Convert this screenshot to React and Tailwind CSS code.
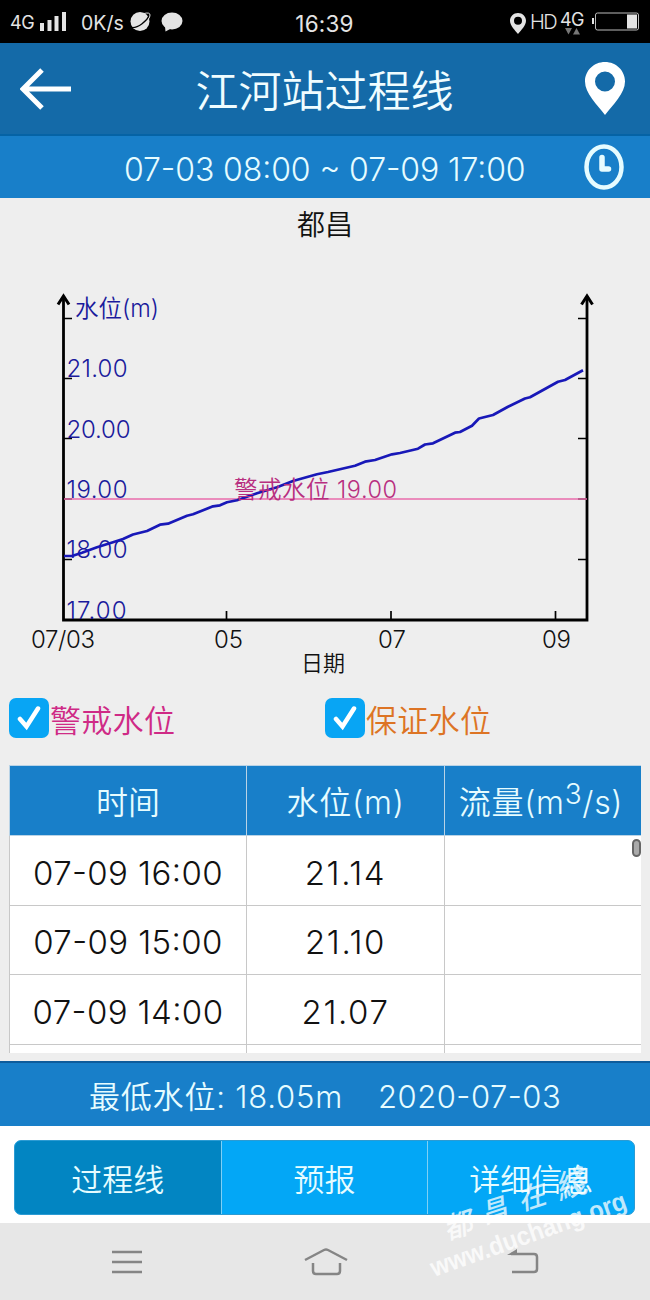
import { useState } from 'react';

const FONT = "font-[Inter,'Noto_Sans_CJK_SC',sans-serif]";

// 水位過程線的折線座標
const LINE_POINTS =
  '64,556 72,556 82,552.7 97,547.3 113,542.3 123,539 133,534.5 147,531 160,524.7 168,523.7 187,515.7 193,514.3 213,506.3 220,505.3 227,502.3 237,500.3 257,493.3 277,487.3 293,481 317,474.3 328,472 355,465.7 365,461.7 375,460 392,454.3 400,453 418,448.7 425,444.5 433,443.3 455,432.7 460,432 472,425.7 479,418.5 493,415 508,406.7 525,398.5 530,397.3 558,381.7 565,380 583,370.3';

const Y_LABELS = [
  { text: '21.00', y: 377, width: 61 },
  { text: '20.00', y: 437.5, width: 64 },
  { text: '19.00', y: 498, width: 61 },
  { text: '18.00', y: 558, width: 61 },
  { text: '17.00', y: 618.5, width: 60 },
];

const X_LABELS = [
  { text: '07/03', x: 31, width: 64 },
  { text: '05', x: 214, width: 29 },
  { text: '07', x: 378, width: 28 },
  { text: '09', x: 542, width: 29 },
];

const ROWS = [
  { time: '07-09 16:00', level: '21.14', flow: '' },
  { time: '07-09 15:00', level: '21.10', flow: '' },
  { time: '07-09 14:00', level: '21.07', flow: '' },
];

const TABS = ['过程线', '预报', '详细信息'];

function PinIcon({ className }) {
  return (
    <svg viewBox="0 0 40 53" className={className} fill="currentColor">
      <path
        fillRule="evenodd"
        d="M20 0C8.800 0 0 8.700 0 19.500C0 31.500 12 42.500 20 53C28 42.500 40 31.500 40 19.500C40 8.700 31.200 0 20 0ZM20 9.500A10 10 0 1 1 20 29.500A10 10 0 1 1 20 9.500Z"
      />
    </svg>
  );
}

/** 手機系統狀態列 */
function StatusBar() {
  return (
    <div className="flex h-[43px] items-center justify-between bg-black text-[#e4e4e4]">
      <div className="flex w-[260px] items-center pl-[10px]">
        <span className="mt-[2px] text-[18px] tracking-[-0.5px]">4G</span>
        <svg width="26" height="20" viewBox="0 0 26 20" className="ml-[6px]" fill="currentColor">
          <rect x="0" y="11" width="4" height="8" />
          <rect x="7.500" y="8" width="4" height="11" />
          <rect x="14.500" y="4" width="4" height="15" />
          <rect x="22" y="0" width="4" height="19" />
        </svg>
        <span className="mt-[4px] ml-[15px] w-[45px] text-[19.500px] whitespace-nowrap">0K/s</span>
        <svg width="21" height="21" viewBox="0 0 21 21" className="ml-[4px]">
          <circle cx="10" cy="10.500" r="9.500" fill="currentColor" />
          <path d="M2 16.500C8 17 17 10 19.500 4" fill="none" stroke="#000" strokeWidth="1.300" />
          <path d="M14 2.500Q20 1 20 4Q20 6 18.500 8" fill="none" stroke="currentColor" strokeWidth="1" />
        </svg>
        <svg width="22" height="20" viewBox="0 0 22 20" className="ml-[10px]" fill="currentColor">
          <ellipse cx="11" cy="9" rx="10.500" ry="8.500" />
          <path d="M4 14L4.500 19.500L11 16Z" />
        </svg>
      </div>
      <span className="mt-[4px] -ml-px text-[22.500px] tracking-[0.2px] [font-feature-settings:'calt'_0]">16:39</span>
      <div className="flex w-[260px] items-center justify-end pr-[11px]">
        <PinIcon className="mt-[3px] h-[23px] w-[16px]" />
        <span className="ml-[4px] w-[26px] text-[20px] leading-[28px] font-light tracking-[-1.500px] whitespace-nowrap">HD</span>
        <div className="mt-[2px] ml-[4px] flex flex-col items-center">
          <span className="text-[18px] leading-[17px] tracking-[-0.5px]">4G</span>
          <svg width="16" height="7" viewBox="0 0 16 7" fill="#777">
            <path d="M1 0H8L4.500 6.500Z" />
            <path d="M9 6.500H16L12.500 0Z" />
          </svg>
        </div>
        <svg width="47" height="19" viewBox="0 0 47 19" className="ml-[8px]">
          <rect x="0" y="6" width="2" height="6" fill="currentColor" />
          <rect x="3.500" y="1" width="43" height="17" rx="2" fill="none" stroke="#bbb" />
          <rect x="35" y="2.500" width="10" height="14" fill="currentColor" />
        </svg>
      </div>
    </div>
  );
}

/** 水位過程線圖 */
function LevelChart({ showWarning }) {
  return (
    <svg width="650" height="440" viewBox="0 240 650 440" className="block font-[350]">
      <g stroke="#000" fill="none">
        <path d="M63.500 296V620H587V296" strokeWidth="2.800" />
        <path d="M58 304.500L63.500 296L69 304.500M581.500 304.500L587 296L592.500 304.500" strokeWidth="3" />
        <path
          d="M64 318.500H72M64 378.500H72M64 438.500H72M64 499H72M64 559.500H72M578 318.500H587M578 378.500H587M578 438.500H587M578 499H587M578 559.500H587M226.500 611V620M391 611V620M555.500 611V620"
          strokeWidth="1.700"
        />
      </g>
      {showWarning && <path d="M64 499H587" stroke="#e86bab" strokeWidth="1.700" />}
      <g fill="#1a1a9c" fontSize="24">
        <text x="75" y="317" textLength="84" lengthAdjust="spacingAndGlyphs">水位(m)</text>
        {Y_LABELS.map((l) => (
          <text key={l.text} x="66.500" y={l.y} textLength={l.width}>{l.text}</text>
        ))}
      </g>
      <polyline points={LINE_POINTS} fill="none" stroke="#1818b8" strokeWidth="2.700" strokeLinejoin="round" />
      {showWarning && (
        <text x="234" y="497.500" fill="#b82f80" fontSize="23.500" textLength="163">警戒水位 19.00</text>
      )}
      <g fill="#111" fontSize="24">
        {X_LABELS.map((l) => (
          <text key={l.text} x={l.x} y="647.500" textLength={l.width}>{l.text}</text>
        ))}
        <text x="301" y="670.500" fontSize="22" textLength="44">日期</text>
      </g>
    </svg>
  );
}

function CheckOption({ label, checked, onChange, className }) {
  return (
    <label className={`flex h-[44px] w-[316px] items-center text-[31px] font-[350] ${className}`}>
      <input type="checkbox" checked={checked} onChange={onChange} className="sr-only" />
      <span className="flex size-[40px] items-center justify-center rounded-[7px] bg-[#08a5f4]">
        {checked && (
          <svg width="24" height="26" viewBox="0 0 24 26" fill="none" stroke="#fff" strokeWidth="4.500">
            <path d="M3 14L9.500 21.500L21 3.500" strokeLinecap="round" />
          </svg>
        )}
      </span>
      <span className="mt-[4px] ml-px leading-none tracking-[0.3px]">{label}</span>
    </label>
  );
}

/** 右下角的網站浮水印 */
function Watermark() {
  return (
    <svg
      width="220"
      height="130"
      viewBox="0 0 220 130"
      className="pointer-events-none absolute right-0 bottom-[5px] overflow-visible font-['Liberation_Sans','Noto_Sans_CJK_TC',sans-serif]"
      fill="#fff"
      fillOpacity="0.75"
    >
      <g fontStyle="italic" fontWeight="500">
        <text transform="translate(17 75) rotate(-18)" fontSize="29">都</text>
        <text transform="translate(54 59) rotate(-18)" fontSize="27">昌</text>
        <text transform="translate(91 46) rotate(-18)" fontSize="28">在</text>
        <text transform="translate(129 35) rotate(-18)" fontSize="31">綫</text>
      </g>
      <text
        transform="translate(4 112) rotate(-19.500)"
        fontSize="26"
        fontWeight="bold"
        textLength="206"
        lengthAdjust="spacingAndGlyphs"
      >
        www.duchang.org
      </text>
    </svg>
  );
}

export default function App() {
  const [warning, setWarning] = useState(true);
  const [guarantee, setGuarantee] = useState(true);
  const [tab, setTab] = useState(0);

  return (
    <div className={`relative flex h-[1300px] w-[650px] flex-col overflow-hidden bg-[#eeeeee] ${FONT}`}>
      <StatusBar />

      {/* 標題列 */}
      <header className="flex h-[93px] items-center justify-between border-b-2 border-[#0563a5] bg-[#146aa8] pr-[25px] pl-[20px] text-white">
        <svg width="51" height="42" viewBox="0 0 51 42" fill="none" stroke="currentColor" strokeWidth="5">
          <path d="M22 2L3 21L22 40M3 21H51" />
        </svg>
        <h1 className="mt-[6px] -ml-[7px] text-[43px] leading-none font-[350] text-[#f0fdff]">江河站过程线</h1>
        <PinIcon className="h-[53px] w-[40px]" />
      </header>

      {/* 查詢時間範圍 */}
      <div className="flex h-[62px] items-center justify-end bg-[#187fc9] pr-[26px] text-[#e6fcff]">
        <span className="mt-[5px] w-[403px] text-[32px] leading-none font-[350] tracking-[-0.100px] whitespace-nowrap [font-feature-settings:'case'_1]">
          07-03 08:00 ~ 07-09 17:00
        </span>
        <svg width="40" height="46" viewBox="0 0 40 46" className="ml-[57px]" fill="none" stroke="currentColor">
          <ellipse cx="20" cy="23" rx="17.500" ry="20.500" strokeWidth="4.500" />
          <path d="M18 13.500V25H24.500" strokeWidth="5.500" strokeLinecap="round" strokeLinejoin="round" />
        </svg>
      </div>

      <h2 className="h-[42px] pt-[13px] text-center text-[28px] leading-none font-[350] text-[#111]">都昌</h2>
      <LevelChart showWarning={warning} />

      <div className="mt-[16px] flex pl-[9px]">
        <CheckOption label="警戒水位" checked={warning} onChange={() => setWarning(!warning)} className="text-[#cf2a86]" />
        <CheckOption label="保证水位" checked={guarantee} onChange={() => setGuarantee(!guarantee)} className="text-[#dd7424]" />
      </div>

      {/* 水位資料表 */}
      <div className="relative mx-[9px] mt-[25px] h-[288px] overflow-hidden">
        <table className="w-full table-fixed border-collapse text-center font-[350]">
          <colgroup>
            <col className="w-[237px]" />
            <col className="w-[198px]" />
            <col className="w-[197px]" />
          </colgroup>
          <thead className="bg-[#187fc9] text-[32px] text-[#e6fcff]">
            <tr className="h-[70px]">
              <th className="border border-[#b9d3e6] pt-[5px] font-[350]">时间</th>
              <th className="border border-[#b9d3e6] pt-[5px] font-[350] tracking-[0.800px]">水位(m)</th>
              <th className="border border-[#b9d3e6] pt-[5px] pr-[4px] font-[350] tracking-[0.700px] whitespace-nowrap">
                流量(m<sup className="top-[-10px] text-[28px] leading-none">3</sup>/s)
              </th>
            </tr>
          </thead>
          <tbody className="bg-white text-[33px] text-[#111]">
            {ROWS.map((row) => (
              <tr key={row.time} className="h-[69.600px]">
                <td className="border border-[#c8c8c8] pt-[6px] tracking-[0.400px] whitespace-nowrap [font-feature-settings:'case'_1]">
                  {row.time}
                </td>
                <td className="border border-[#c8c8c8] pt-[6px] tracking-[1.600px]">{row.level}</td>
                <td className="border border-[#c8c8c8]">{row.flow}</td>
              </tr>
            ))}
            <tr className="h-[70px]">
              <td className="border border-[#c8c8c8]" />
              <td className="border border-[#c8c8c8]" />
              <td className="border border-[#c8c8c8]" />
            </tr>
          </tbody>
        </table>
        {/* 捲軸 */}
        <div className="absolute top-[74px] right-0 h-[18px] w-[9px] rounded-full border-2 border-[#666] bg-[#aaa]" />
      </div>

      {/* 最低水位 */}
      <div className="mt-[8px] flex h-[65px] items-center border-t-2 border-[#0d5c9c] bg-[#187fc9] pt-[5px] pl-[89px] text-[31px] font-[350] whitespace-nowrap text-[#e6fcff]">
        <span className="w-[289px] tracking-[0.800px]">最低水位: 18.05m</span>
        <span className="tracking-[0.500px] [font-feature-settings:'case'_1]">2020-07-03</span>
      </div>

      {/* 底部分頁 */}
      <nav className="h-[97px] bg-white px-[14px] pt-[14px]">
        <div className="flex h-[75px] w-[621px] overflow-hidden rounded-[7px] border border-[#2c9bd3] bg-[#03a7f6]">
          {TABS.map((name, i) => (
            <button
              key={name}
              onClick={() => setTab(i)}
              className={`flex-1 border-r border-[#7fd0f5] pt-[5px] text-[31px] font-[350] text-[#e6fcff] last:border-r-0 ${
                tab === i ? 'bg-[#0285c2]' : ''
              }`}
            >
              {name}
            </button>
          ))}
        </div>
      </nav>

      {/* 系統導覽鍵 */}
      <div className="flex flex-1 items-center bg-[#e7e7e7] pl-[111px] text-[#858585]">
        <svg width="31" height="26" viewBox="0 0 31 26" fill="none" stroke="currentColor" strokeWidth="2.500">
          <path d="M1 3H31M1 13H31M1 23H31" />
        </svg>
        <svg width="44" height="28" viewBox="0 0 44 28" className="ml-[162px]" fill="none" stroke="currentColor" strokeWidth="2.500">
          <path d="M1 12L20 2Q22 1 24 2L43 12M9 15V23Q9 26 12 26H33Q36 26 36 23V15" />
        </svg>
        <svg width="32" height="26" viewBox="0 0 32 26" className="ml-[159px]" fill="none" stroke="currentColor" strokeWidth="2.500">
          <path d="M4 5H27Q30 5 30 8V20Q30 23 27 23H5" />
          <path d="M0 6L10 0V6Z" fill="currentColor" stroke="none" />
        </svg>
      </div>

      <Watermark />
    </div>
  );
}
